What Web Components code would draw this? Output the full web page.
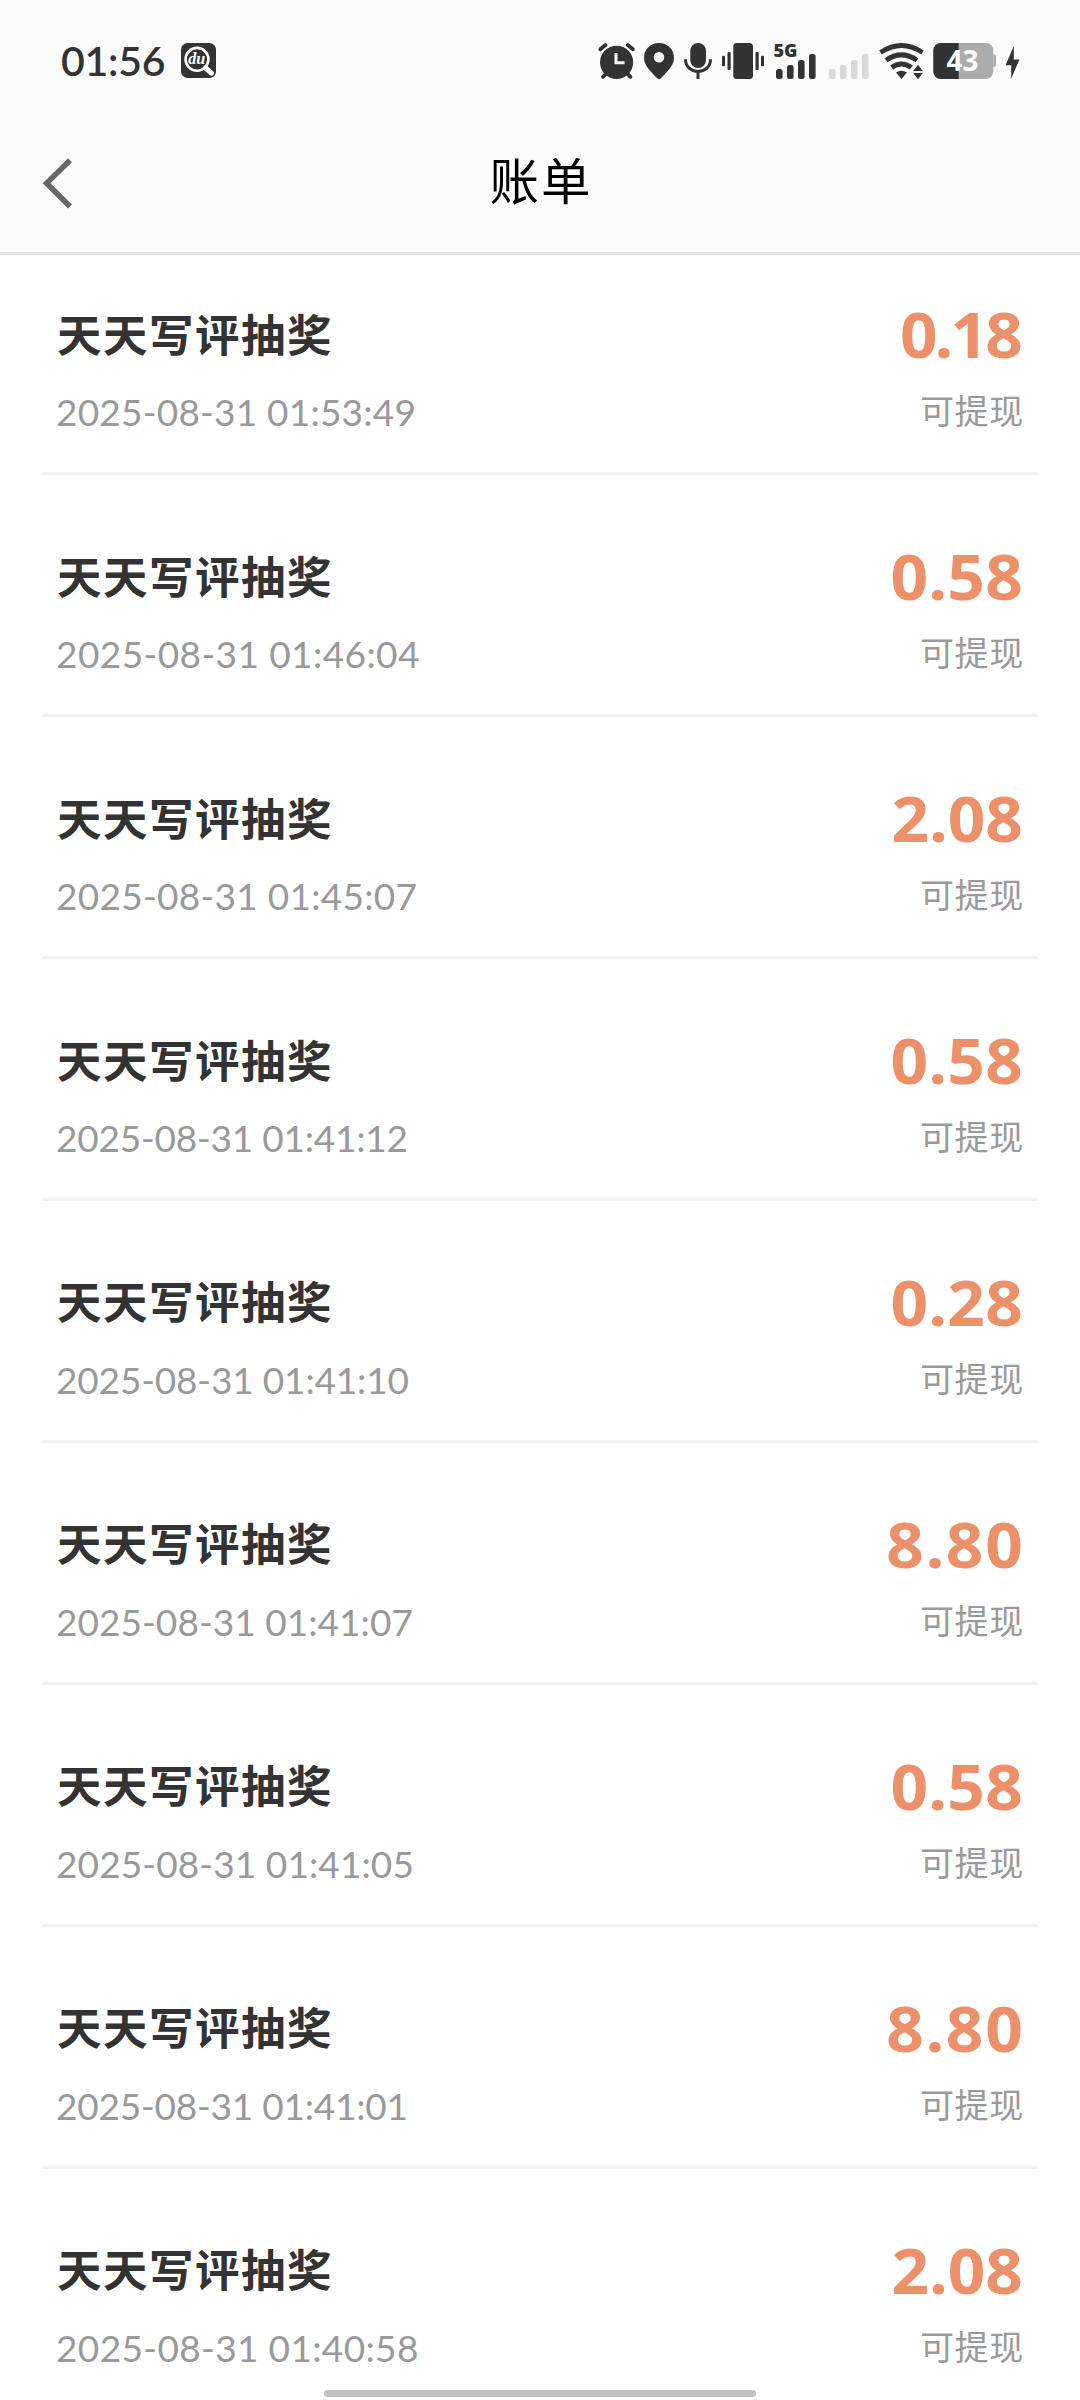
<!DOCTYPE html>
<html lang="zh-CN">
<head>
<meta charset="utf-8">
<title>账单</title>
<style>
html,body{margin:0;padding:0;background:#fff}
body{width:1080px;height:2400px;overflow:hidden}
</style>
</head>
<body>
<bill-screen></bill-screen>
<script>
const define = (name, html, ready) => {
  const template = document.createElement('template');
  template.innerHTML = html;
  customElements.define(name, class extends HTMLElement {
    connectedCallback() {
      if (this.shadowRoot) return;
      this.attachShadow({ mode: 'open' }).append(template.content.cloneNode(true));
      if (ready) ready.call(this);
    }
  });
};

// Text run whose tracking is adjusted so that its advance equals the width attribute.
define('fit-text', `
<style>
:host{display:block;white-space:nowrap;font-kerning:none}
span{display:inline-block}
</style><span></span>`, function () {
  const s = this.shadowRoot.querySelector('span');
  s.textContent = this.getAttribute('text');
  const target = parseFloat(this.getAttribute('width'));
  const n = s.textContent.length;
  const ls = (target - s.offsetWidth) / (n - 1);
  s.style.letterSpacing = ls + 'px';
  s.style.marginRight = -ls + 'px';
});

define('status-bar', `
<style>
:host{display:flex;height:79px;padding:42px 60px 0 61px;box-sizing:border-box;justify-content:space-between;color:#333}
.side{display:flex;height:38px;align-items:flex-start}
svg{display:block;height:38px;flex:none;overflow:visible}
.clock{font:600 41px/38px Lato,"Noto Sans CJK SC",sans-serif;margin-right:15px}
.g5{font:800 17.5px "Open Sans",sans-serif}
.pct{font:700 28px "Open Sans",sans-serif}
.du{font:italic 700 17px "Liberation Serif",serif}
</style>
<div class="side">
  <fit-text class="clock" text="01:56" width="105"></fit-text>
  <svg width="35" viewBox="181 42 35 38"><rect x="181" y="43" width="35" height="35" rx="6.5" fill="#333"/><circle cx="197" cy="59.3" r="11.4" fill="none" stroke="#fff" stroke-width="2.6"/><path d="M205.5 68l6 5.2" stroke="#fff" stroke-width="5" stroke-linecap="round"/><text class="du" x="188.3" y="64.3" fill="#fff" textLength="17" lengthAdjust="spacingAndGlyphs">du</text></svg>
</div>
<div class="side">
  <svg width="46" viewBox="598 42 46 38"><g stroke="#333" stroke-width="3.8" stroke-linecap="round"><path d="M600.3 49.3l5.2-4.2M632.9 49.3l-5.2-4.2M603 76.8l4-4M630.4 76.8l-4-4"/></g><circle cx="616.6" cy="62.3" r="16.6" fill="#333"/><path d="M616 53v9.8h8.6" fill="none" stroke="#fafafa" stroke-width="3"/></svg>
  <svg width="40" viewBox="644 42 40 38"><path fill="#333" fill-rule="evenodd" d="M659 43c8.600 0 15 6.300 15 14.700 0 6.700-4.600 11.800-13.200 20.500q-1.800 1.700-3.600 0C648.600 69.500 644 64.400 644 57.700 644 49.300 650.400 43 659 43zm0 9a5.300 5.300 0 1 0 0 10.600 5.300 5.300 0 0 0 0-10.600z"/></svg>
  <svg width="38" viewBox="684 42 38 38"><rect x="690.300" y="43" width="15.700" height="25" rx="7.800" fill="#333"/><path d="M685.500 59.300c0 7.500 5.500 12.200 12.500 12.200s12.500-4.700 12.500-12.200M698 71v8" fill="none" stroke="#333" stroke-width="3"/></svg>
  <svg width="52" viewBox="722 42 52 38" fill="#333"><rect x="733.300" y="43" width="19.700" height="36" rx="3.500"/><rect x="727.500" y="52" width="3.200" height="18" rx="1"/><rect x="722" y="55.700" width="3" height="10.500" rx="1"/><rect x="755.500" y="52" width="3.200" height="18" rx="1"/><rect x="761" y="55.700" width="3" height="10.500" rx="1"/></svg>
  <svg width="54" viewBox="774 42 54 38" fill="#333"><text class="g5" x="773.500" y="56.500" textLength="24" lengthAdjust="spacingAndGlyphs">5G</text><rect x="776" y="69" width="6.600" height="10" rx="2.500"/><rect x="787" y="65" width="6.600" height="14" rx="2.500"/><rect x="798" y="60" width="6.600" height="19" rx="2.500"/><rect x="809" y="54" width="6.600" height="25" rx="2.500"/></svg>
  <svg width="51" viewBox="828 42 51 38" fill="#d9d9d9"><rect x="828.900" y="69" width="6.600" height="10" rx="2"/><rect x="839.900" y="65" width="6.600" height="14" rx="2"/><rect x="850.900" y="60" width="6.600" height="19" rx="2"/><rect x="861.900" y="54" width="6.600" height="25" rx="2"/></svg>
  <svg width="54" viewBox="879 42 54 38"><g fill="none" stroke="#333" stroke-width="5"><path d="M880.500 52.500Q901.500 38.500 922.500 52.500M886 60.300Q901.500 49.500 917 60.300M891.700 67.600Q901.500 60.400 911.300 67.600"/></g><path fill="#333" d="M896 72.400q5.500-3.400 11 0L901.500 79zM918 64.800l4.800 6.200h-9.600zM918 79.200l4.800-6.200h-9.600z"/></svg>
  <svg width="72" viewBox="933 42 72 38"><rect x="933.300" y="43" width="60" height="36" rx="7.500" fill="#ababab"/><path fill="#333" d="M958.700 43v36h-17.900a7.500 7.500 0 0 1-7.500-7.500v-21a7.500 7.500 0 0 1 7.500-7.500z"/><path fill="#ababab" d="M993.300 54q2.700 0 2.700 2.500v8q0 2.500-2.700 2.500z"/><text class="pct" x="946.500" y="71" fill="#fff" textLength="32" lengthAdjust="spacingAndGlyphs">43</text></svg>
  <svg width="15" viewBox="1005 42 15 38"><path fill="#333" d="M1013.800 46L1005.600 65.300H1011.200V78.800L1019.400 59.400H1013.800z"/></svg>
</div>`);

define('nav-bar', `
<style>
:host{display:grid;grid-template-columns:1fr auto 1fr;height:176px;box-sizing:border-box;border-bottom:3px solid #e3e3e3;padding:0 42px}
svg{display:block;margin-top:78px}
h1{margin:0;padding-top:64px;font:400 49.500px/72px "Noto Sans CJK SC",sans-serif;letter-spacing:2px;margin-right:-2px;color:#000}
</style>
<svg width="30" height="52" viewBox="42 157 30 52"><path d="M70 160.300L46.600 183.300 70 206.500" fill="none" stroke="#666" stroke-width="5.500"/></svg>
<h1><slot></slot></h1>`);

define('bill-row', `
<style>
:host{display:flex;justify-content:space-between;height:241.9px;box-sizing:border-box;padding:69.500px 15px 0 14px;border-bottom:3px solid #f2f2f2}
.left,.right{display:flex;flex-direction:column}
.right{align-items:flex-end}
.name{font:700 44.5px/60px "Noto Sans CJK SC",sans-serif;letter-spacing:1.5px;color:#333;margin-left:1px}
.time{font:400 37px/46px Lato,"Noto Sans CJK SC",sans-serif;color:#999;margin-top:26.500px}
.sum{font:700 62px/60px "Noto Sans",sans-serif;color:#eb9069;margin:1.500px 0 0;transform:scaleX(1.06);transform-origin:right}
.note{font:400 34px/46px "Noto Sans CJK SC",sans-serif;letter-spacing:.7px;margin-right:-1px;margin-top:23px;color:#999}
</style>
<div class="left"><div class="name"><slot></slot></div><fit-text class="time"></fit-text></div>
<div class="right"><fit-text class="sum"></fit-text><div class="note">可提现</div></div>`);

define('bill-screen', `
<style>
:host{display:block;width:1080px;height:2400px;overflow:hidden;position:relative;background:#fff}
header{background:#fbfbfb}
main{padding:0 42px;margin-top:-21.600px;display:flex;flex-direction:column}
main>*{flex:none}
.home{position:absolute;left:324px;top:2390px;width:432px;height:7px;border-radius:4px;background:#c1c1c1}
</style>
<header><status-bar></status-bar><nav-bar>账单</nav-bar></header>
<main></main>
<div class="home"></div>`, function () {
  const rows = [
    ['2025-08-31 01:53:49', 360, '0.18', 116],
    ['2025-08-31 01:46:04', 363.5, '0.58', 125],
    ['2025-08-31 01:45:07', 361, '2.08', 124],
    ['2025-08-31 01:41:12', 352, '0.58', 125],
    ['2025-08-31 01:41:10', 353, '0.28', 125],
    ['2025-08-31 01:41:07', 357, '8.80', 129],
    ['2025-08-31 01:41:05', 358, '0.58', 125],
    ['2025-08-31 01:41:01', 352, '8.80', 129],
    ['2025-08-31 01:40:58', 362.5, '2.08', 124]
  ];
  const main = this.shadowRoot.querySelector('main');
  for (const [time, timeWidth, sum, sumWidth] of rows) {
    const row = document.createElement('bill-row');
    row.textContent = '天天写评抽奖';
    main.append(row);
    const fill = (cls, text, width) => {
      const old = row.shadowRoot.querySelector(cls);
      const el = document.createElement('fit-text');
      el.className = old.className;
      el.setAttribute('text', text);
      el.setAttribute('width', width);
      old.replaceWith(el);
    };
    fill('.time', time, timeWidth);
    fill('.sum', sum, sumWidth);
  }
});
</script>
</body>
</html>
